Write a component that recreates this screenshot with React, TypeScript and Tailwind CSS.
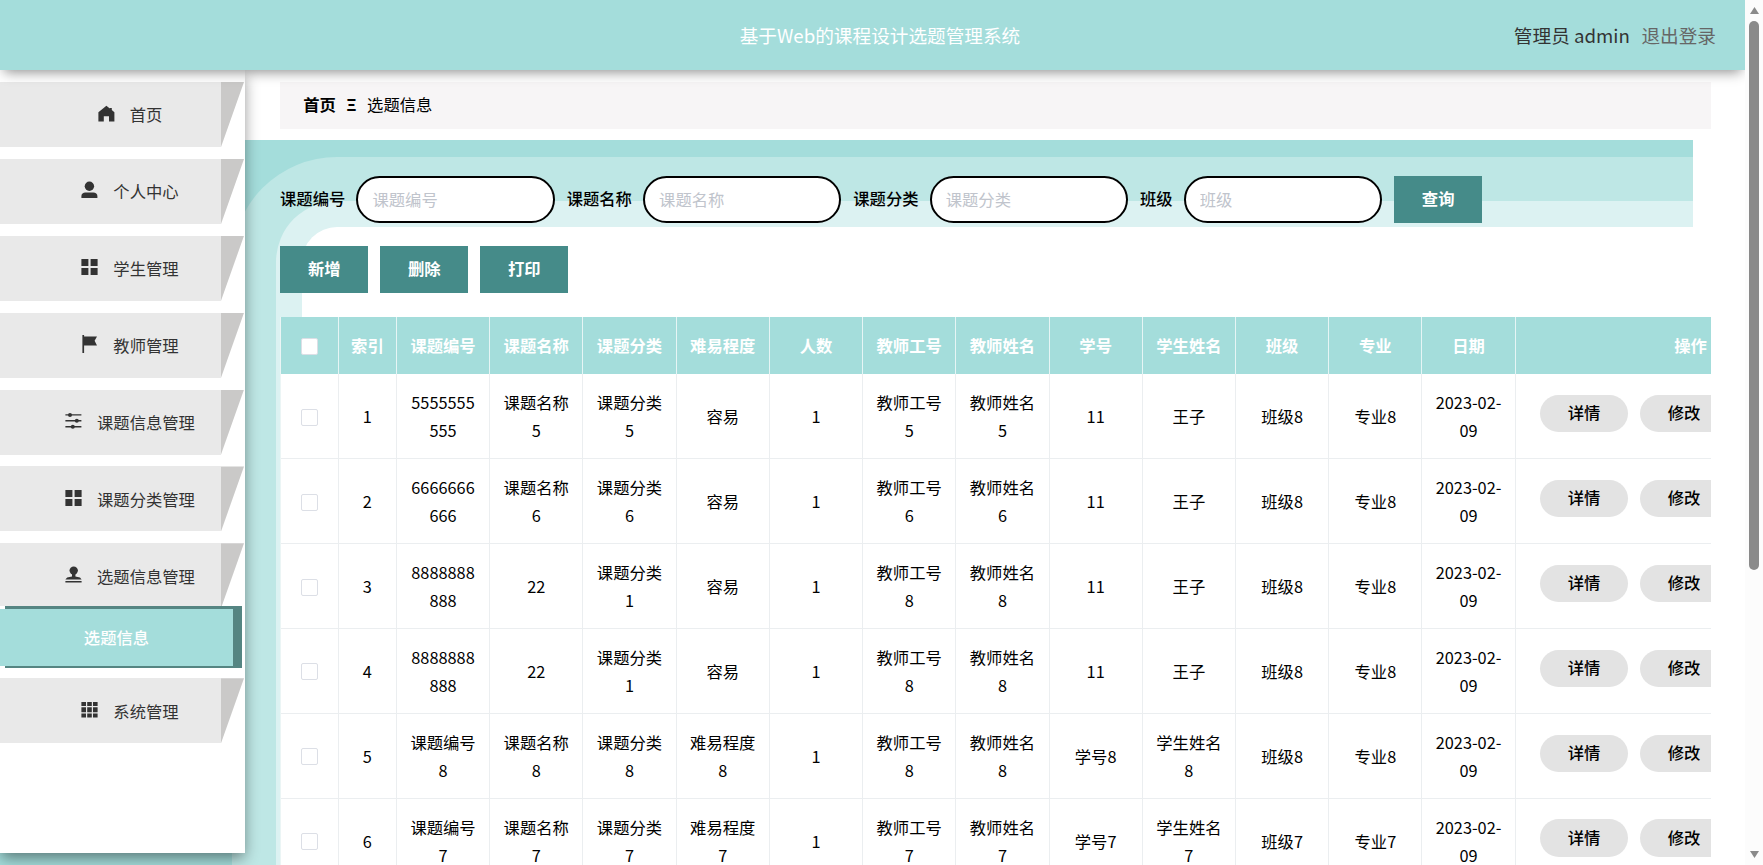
import type { ReactNode } from "react";

type MenuItem = { label: string; icon: ReactNode; children?: string[] };

const MENU: MenuItem[] = [
  { label: "首页", icon: <path d="M8 -0.2 0 6.2V15.6H5.4V10.2H10.6V15.6H16V6.2L13.4 4V2H11.4V2.5Z" /> },
  {
    label: "个人中心",
    icon: (
      <>
        <circle cx="8" cy="4.2" r="4.7" />
        <path d="M0 16V14C0 11.6 1.8 10.4 4 10.4H12C14.2 10.4 16 11.6 16 14V16Z" />
      </>
    ),
  },
  { label: "学生管理", icon: <path d="M0 0H7V7H0ZM9.2 0H16.2V7H9.2ZM0 9H7V16H0ZM9.2 9H16.2V16H9.2Z" /> },
  { label: "教师管理", icon: <path d="M1 -1H2.7V0.4H15.6L13.2 4.8 15.6 9.4H2.7V17H1Z" /> },
  {
    label: "课题信息管理",
    icon: (
      <>
        <path d="M0 1.2H16V2.6H0ZM0 7.1H16V8.5H0ZM0 13H16V14.4H0Z" />
        <circle cx="4.6" cy="1.9" r="2" />
        <circle cx="11.4" cy="7.8" r="2" />
        <circle cx="7.4" cy="13.7" r="2" />
      </>
    ),
  },
  { label: "课题分类管理", icon: <path d="M0 0H7V7H0ZM9.2 0H16.2V7H9.2ZM0 9H7V16H0ZM9.2 9H16.2V16H9.2Z" /> },
  {
    label: "选题信息管理",
    icon: (
      <>
        <circle cx="8.3" cy="3.6" r="4.2" />
        <path d="M6.6 6H10V9.6L14.6 10.6 16.2 12.6H0L1.8 10.6 6.6 9.6ZM0 14H16.2V15.4H0Z" />
      </>
    ),
    children: ["选题信息"],
  },
  {
    label: "系统管理",
    icon: (
      <path d="M0 0H4.6V4H0ZM5.8 0H10.4V4H5.8ZM11.6 0H16.2V4H11.6ZM0 5.2H4.6V10.2H0ZM5.8 5.2H10.4V10.2H5.8ZM11.6 5.2H16.2V10.2H11.6ZM0 11.6H4.6V15.6H0ZM5.8 11.6H10.4V15.6H5.8ZM11.6 11.6H16.2V15.6H11.6Z" />
    ),
  },
];

const FILTERS = ["课题编号", "课题名称", "课题分类", "班级"];

const COLUMNS = [
  "课题编号", "课题名称", "课题分类", "难易程度", "人数", "教师工号",
  "教师姓名", "学号", "学生姓名", "班级", "专业", "日期",
];

const ROWS = [
  ["5555555555", "课题名称5", "课题分类5", "容易", "1", "教师工号5", "教师姓名5", "11", "王子", "班级8", "专业8", "2023-02-09"],
  ["6666666666", "课题名称6", "课题分类6", "容易", "1", "教师工号6", "教师姓名6", "11", "王子", "班级8", "专业8", "2023-02-09"],
  ["8888888888", "22", "课题分类1", "容易", "1", "教师工号8", "教师姓名8", "11", "王子", "班级8", "专业8", "2023-02-09"],
  ["8888888888", "22", "课题分类1", "容易", "1", "教师工号8", "教师姓名8", "11", "王子", "班级8", "专业8", "2023-02-09"],
  ["课题编号8", "课题名称8", "课题分类8", "难易程度8", "1", "教师工号8", "教师姓名8", "学号8", "学生姓名8", "班级8", "专业8", "2023-02-09"],
  ["课题编号7", "课题名称7", "课题分类7", "难易程度7", "1", "教师工号7", "教师姓名7", "学号7", "学生姓名7", "班级7", "专业7", "2023-02-09"],
];

const GRID = "grid w-[1584.6px] grid-cols-[57.9px_58px_repeat(12,93.24px)_349.7px]";

function Header() {
  return (
    <header className="relative z-20 grid h-[70px] shrink-0 grid-cols-3 items-center bg-[#a4dddb] text-[18.65px] shadow-[0_6px_12px_-4px_rgba(0,0,0,0.45)]">
      <h1 className="col-start-2 pl-[15px] text-center text-white">基于Web的课程设计选题管理系统</h1>
      <div className="flex justify-end gap-[11.66px] pr-[29px]">
        <span className="text-[#333]">管理员 admin</span>
        <a href="#" className="text-[#666]">退出登录</a>
      </div>
    </header>
  );
}

function Sidebar() {
  return (
    <aside className="relative z-10 h-[783px] w-[245px] shrink-0 bg-white pt-3 text-[#333] shadow-[0_6px_14px_-1px_rgba(0,0,0,0.45)]">
      {MENU.map((item) => (
        <div key={item.label} className={item.children ? "mb-[10px]" : "mb-[11.9px]"}>
          <div className="flex h-[65px]">
            <div className="flex w-[221px] items-center justify-center gap-[15px] bg-[#e9e9e9] pl-[39px]">
              <svg viewBox="0 0 16.2 16" className="-mt-0.5 h-4 w-[17px] overflow-visible fill-[#333]">
                {item.icon}
              </svg>
              <span>{item.label}</span>
            </div>
            <div className="w-[23px] bg-[#cac9c8] [clip-path:polygon(0_0,100%_0,0_100%)]" />
          </div>
          {item.children?.map((child) => (
            <div key={child} className="relative -mt-[2px] bg-white">
              <div className="ml-[5px] w-[237px] bg-[#558582] py-[2.5px]">
                <a href="#" className="-ml-[5px] flex h-[57px] w-[233px] items-center justify-center bg-[#a4dddb] font-medium text-white">
                  {child}
                </a>
              </div>
            </div>
          ))}
        </div>
      ))}
    </aside>
  );
}

function Button({ children }: { children: ReactNode }) {
  return (
    <button className="h-[47px] w-[88.4px] bg-[#458b89] pb-0.5 font-bold text-white">{children}</button>
  );
}

function CheckBox() {
  return <span className="block size-[17px] rounded-[2px] border border-[#dcdfe6] bg-white" />;
}

function TopicTable() {
  return (
    <div className="mt-6 w-[1431px] overflow-hidden border-l border-[#ebf5f5] bg-white">
      <div className={`${GRID} h-[57.4px] bg-[#a4dddb] font-bold text-white`}>
        <div className="flex items-center justify-center border-r border-[#e6f5f5] pt-0.5"><CheckBox /></div>
        <div className="flex items-center justify-center border-r border-[#e6f5f5]">索引</div>
        {COLUMNS.map((name) => (
          <div key={name} className="flex items-center justify-center border-r border-[#e6f5f5]">{name}</div>
        ))}
        <div className="flex items-center justify-center">操作</div>
      </div>
      {ROWS.map((row, i) => (
        <div key={i} className={`${GRID} h-[84.85px] border-b border-[#ebeef0] leading-7 text-black`}>
          <div className="flex items-center justify-center border-r border-[#ebeef0] pt-0.5"><CheckBox /></div>
          <div className="flex items-center justify-center border-r border-[#ebeef0]">{i + 1}</div>
          {row.map((cell, j) => (
            <div key={j} className="flex items-center justify-center border-r border-[#ebeef0] px-3 text-center">
              <span className="min-w-0 wrap-anywhere">{cell}</span>
            </div>
          ))}
          <div className="flex items-center gap-[11.66px] pb-[5px] pl-6">
            <button className="h-[37.3px] w-[88.5px] rounded-full bg-[#e3e3e3] pb-[3px] font-medium">详情</button>
            <button className="h-[37.3px] w-[88.5px] rounded-full bg-[#e3e3e3] pb-[3px] font-medium">修改</button>
          </div>
        </div>
      ))}
    </div>
  );
}

function Main() {
  return (
    <main className="-ml-[245px] flex w-[1745px] flex-col pt-3">
      <nav className="ml-[280px] flex h-[47px] w-[1431px] shrink-0 items-center gap-[10.4px] bg-[#f7f5f6] pb-0.5 pl-[23.3px] text-black">
        <span className="font-bold">首页</span>
        <span className="font-bold">Ξ</span>
        <span>选题信息</span>
      </nav>
      {/* Stepped teal bands, each one nested in the band before it */}
      <div className="mt-[11px] w-[1692.5px] bg-[#a4dddb] pt-[16.5px] pl-[232px]">
        <div className="rounded-tl-[105px] bg-[#bee7e5] pt-[44.5px] pl-11">
          <div className="rounded-tl-[61px] bg-[#dcf2f2] pt-[26px] pl-[26px]">
            <div className="h-[700px] rounded-tl-[35px] bg-white">
              <div className="-ml-[22px] w-[1431px]">
                <div className="relative -top-[51px] -mb-[28px] flex h-[47px] items-center gap-3 text-black">
                  {FILTERS.map((name) => (
                    <label key={name} className="flex items-center gap-[11.2px] font-medium">
                      <span className="pb-0.5">{name}</span>
                      <input
                        placeholder={name}
                        className="h-[47px] w-[198.2px] rounded-full border-2 border-black bg-white px-3.5 pb-0.5 font-normal placeholder:text-[#c0c4cc]"
                      />
                    </label>
                  ))}
                  <Button>查询</Button>
                </div>
                <div className="flex gap-[11.66px]">
                  <Button>新增</Button>
                  <Button>删除</Button>
                  <Button>打印</Button>
                </div>
                <TopicTable />
              </div>
            </div>
          </div>
        </div>
      </div>
    </main>
  );
}

function ScrollTrack() {
  return (
    <div className="flex w-[18px] flex-col items-center justify-between bg-[#fcfcfc] pt-[7px] pb-[7px]">
      <svg viewBox="0 0 9 7" className="h-[7px] w-[9px] shrink-0 fill-[#8a8a8a]"><path d="M4.5 0 9 7H0Z" /></svg>
      <div className="mt-[7px] mb-auto h-[549px] w-[10px] rounded-full bg-[#8a8a8a]" />
      <svg viewBox="0 0 9 7" className="h-[7px] w-[9px] shrink-0 fill-[#8a8a8a]"><path d="M0 0H9L4.5 7Z" /></svg>
    </div>
  );
}

export default function App() {
  return (
    <div className="flex h-[865px] w-[1763px] overflow-hidden bg-white font-['Noto_Sans_CJK_SC',sans-serif] text-[16.32px]">
      <div className="flex w-[1745px] flex-col overflow-hidden">
        <Header />
        <div className="flex min-h-0 flex-1">
          <Sidebar />
          <Main />
        </div>
      </div>
      <ScrollTrack />
    </div>
  );
}
